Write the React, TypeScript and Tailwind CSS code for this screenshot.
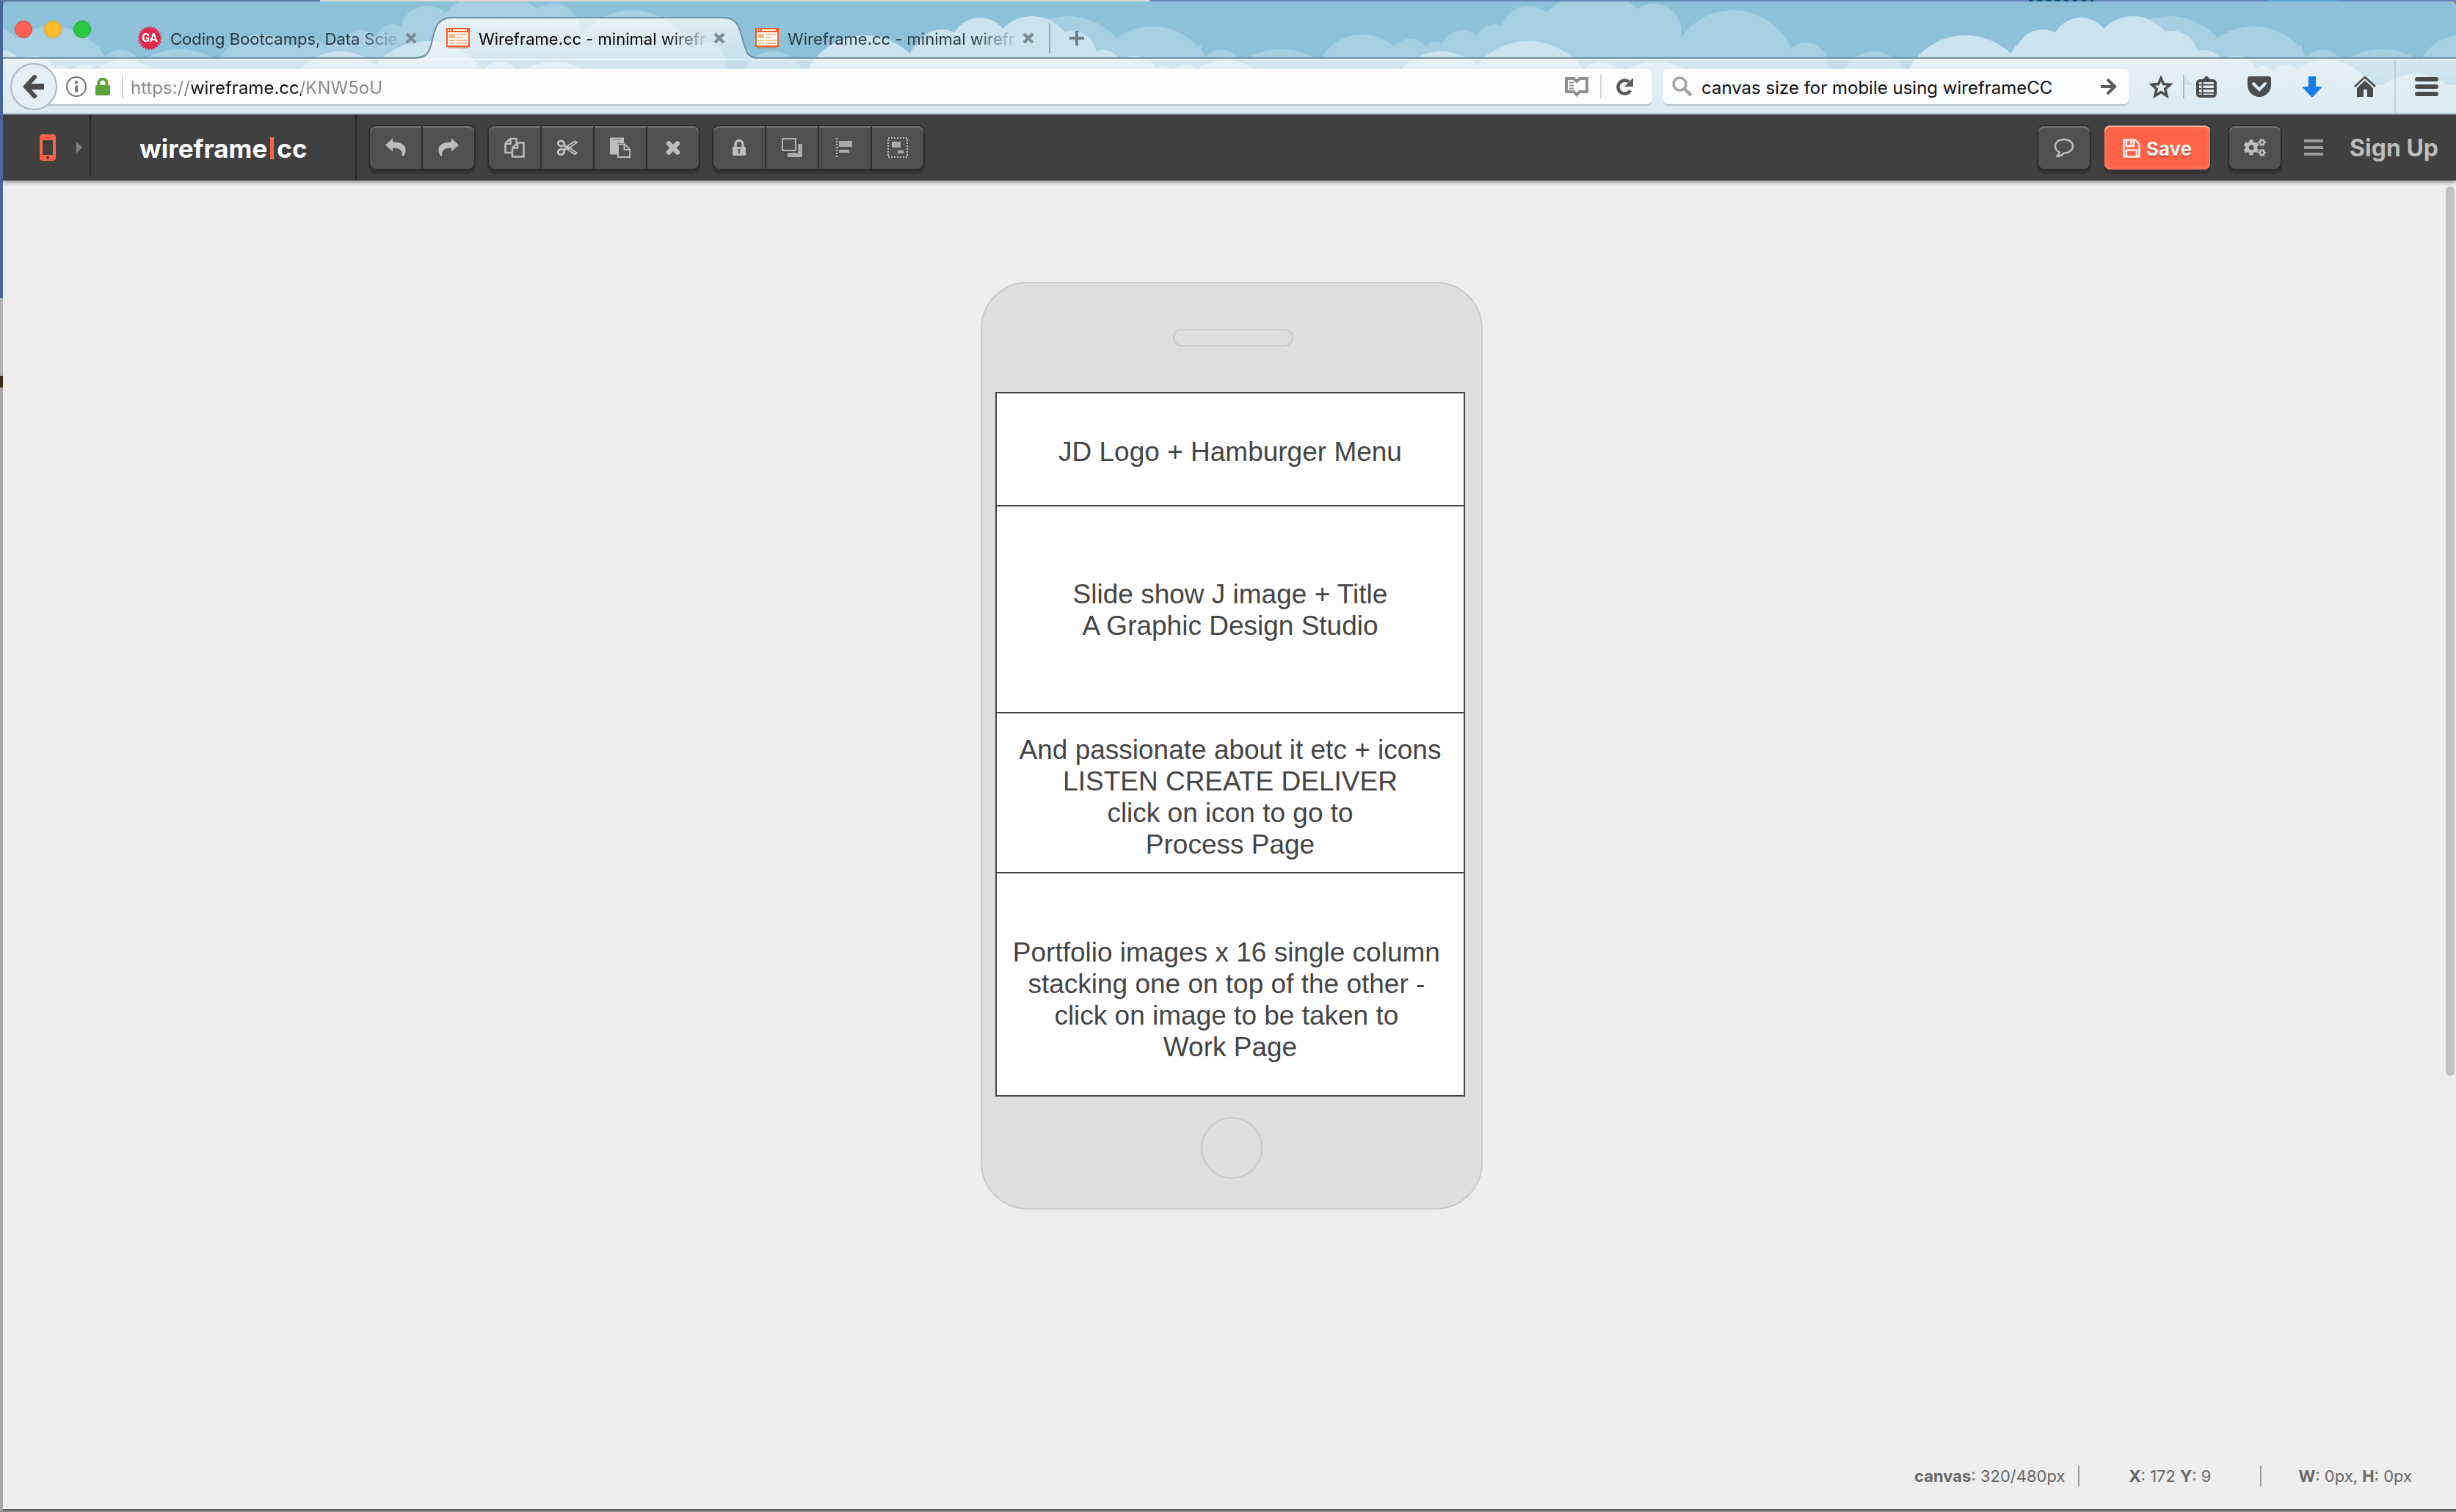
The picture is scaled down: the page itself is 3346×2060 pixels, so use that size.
import React from 'react';
import { FaCogs } from 'react-icons/fa';

type Cloud = [cx: number, top: number, r: number];

// Cloud tops of the browser theme; the artwork repeats every 1500px.
const FAR_CLOUDS: Cloud[] = [
  [10, 47, 65], [75, 53, 29], [109, 57, 15], [146, 41, 29], [190, 33, 26], [236, 8, 37],
  [326, -10, 92], [407, 5, 38], [515, 14, 86], [614, 58, 30], [707, 70, 45], [1109, 22, 88],
  [1224, 36, 84], [1318, 68, 30], [1399, 67, 92],
];
const NEAR_CLOUDS: Cloud[] = [
  [118, 70, 74], [236, 56, 92], [335, 84, 30], [410, 84, 80], [832, 48, 88], [937, 40, 38],
  [989, 24, 40], [1060, 22, 55], [1114, 42, 34], [1157, 68, 26], [1200, 76, 32], [1237, 90, 15],
  [1269, 88, 25], [1324, 82, 70], [1444, 101, 70],
];

function Clouds({ list, fill }: { list: Cloud[]; fill: string }) {
  return (
    <g fill={fill}>
      {[-1500, 0, 1500].map((shift) =>
        list.map(([cx, top, r]) => <circle key={`${shift}-${cx}`} cx={cx + shift} cy={top + r - 2} r={r} />),
      )}
    </g>
  );
}

function ThemeArt() {
  return (
    <svg aria-hidden="true" className="absolute inset-0 h-full w-full">
      <defs>
        <pattern id="sky" x="342" y="0" width="1500" height="160" patternUnits="userSpaceOnUse">
          <rect width="1500" height="160" fill="#8dc1da" />
          <Clouds list={FAR_CLOUDS} fill="#a7cfe2" />
          <path d="M-10 72H150V50H230L640 70V160H-10ZM1100 60H1290V160H1100ZM0 94H1500V160H0Z" fill="#a7cfe2" />
          <Clouds list={NEAR_CLOUDS} fill="#cbe3ef" />
          <path d="M900 60H1130V160H840ZM0 114H1500V160H0Z" fill="#cbe3ef" />
        </pattern>
      </defs>
      <rect width="100%" height="100%" fill="url(#sky)" />
    </svg>
  );
}

function WireframeFavicon() {
  return (
    <svg aria-hidden="true" viewBox="0 0 32 28" className="h-7 w-8 shrink-0">
      <rect width="32" height="26" fill="#ff5a1a" />
      <rect x="2" y="2" width="2" height="2" fill="#fff" />
      <rect x="5" y="2" width="2" height="2" fill="#fff" />
      <rect x="9" y="2" width="19" height="2" fill="#fff" />
      <rect x="2" y="6" width="28" height="18" fill="#fff" />
      <path d="M4 8h8v6H4zM14 8h14v2H14zM14 12h8v2h-8zM4 16h8v2H4zM14 16h14v2H14zM4 20h8v2H4zM14 20h14v2H14z" fill="#ffb690" />
      <rect x="2" y="26" width="28" height="2" fill="#c2683f" opacity=".5" />
    </svg>
  );
}

function GaFavicon() {
  return (
    <span className="relative flex h-8 w-8 shrink-0 items-center justify-center">
      <svg aria-hidden="true" viewBox="0 0 32 32" className="absolute inset-0">
        <circle cx="16" cy="16" r="14.500" fill="#e5294b" />
        <circle cx="16" cy="16" r="14.500" fill="none" stroke="#e5294b" strokeWidth="3" strokeDasharray="1.9 1.9" />
      </svg>
      <span className="relative font-[Roboto,sans-serif] text-base font-bold text-white">GA</span>
    </span>
  );
}

function Tab({ title, icon, active }: { title: string; icon: React.ReactNode; active?: boolean }) {
  return (
    <div className="relative flex items-center">
      {icon}
      <button
        type="button"
        className={
          'ml-3 w-[312px] whitespace-nowrap pt-0.5 text-left text-[22px] leading-7 [mask-image:linear-gradient(to_right,#000_255px,transparent_318px)] ' +
          (active ? 'text-black' : 'text-[#2b3a42]')
        }
      >
        {title}
      </button>
      <button type="button" aria-label="Close tab" className="ml-2">
        <svg viewBox="0 0 16 16" className="h-4 w-4" stroke="#7c8a92" strokeWidth="4">
          <path d="M2 2l12 12M14 2L2 14" />
        </svg>
      </button>
    </div>
  );
}

function TabStrip() {
  return (
    <div className="relative flex h-[78px]">
      <div className="flex w-[561px] border-b-2 border-[#6f8fa0] pl-4">
        <div className="flex gap-4 pt-[26px]">
          <button type="button" aria-label="Close window" className="h-6 w-6 rounded-full border border-[#e0443e] bg-[#ff5f57]" />
          <button type="button" aria-label="Minimize window" className="h-6 w-6 rounded-full border border-[#dea123] bg-[#ffbd2e]" />
          <button type="button" aria-label="Zoom window" className="h-6 w-6 rounded-full border border-[#1aab29] bg-[#28c940]" />
        </div>
        <div className="ml-16 mt-6 flex h-[52px] items-center">
          <Tab title="Coding Bootcamps, Data Scie" icon={<GaFavicon />} />
        </div>
      </div>
      <div className="relative w-[468px] pl-[43px] pt-6">
        <svg aria-hidden="true" viewBox="0 0 468 60" className="absolute left-0 top-5 h-[60px] w-[468px]">
          <defs>
            <linearGradient id="tabFill" x1="0" y1="0" x2="0" y2="1">
              <stop offset="0" stopColor="#fff" stopOpacity=".72" />
              <stop offset="1" stopColor="#fff" stopOpacity=".5" />
            </linearGradient>
          </defs>
          <path d="M0 57C14 57 19 51 22 40C28 18 28 2 52 2H420C441 2 443 18 448 36C452 50 455 57 468 57V58H0Z" fill="url(#tabFill)" />
          <path d="M0 57C14 57 19 51 22 40C28 18 28 2 52 2H420C441 2 443 18 448 36C452 50 455 57 468 57" fill="none" stroke="#6f8fa0" strokeWidth="2" />
        </svg>
        <div className="flex h-[52px] items-center">
          <Tab active title="Wireframe.cc - minimal wirefr" icon={<WireframeFavicon />} />
        </div>
      </div>
      <div className="flex flex-1 border-b-2 border-[#6f8fa0] pt-6">
        <div className="-ml-1 flex h-[52px] items-center">
          <Tab title="Wireframe.cc - minimal wirefr" icon={<WireframeFavicon />} />
          <span className="ml-5 h-10 w-0.5 bg-[#83a9bb]" />
          <button type="button" aria-label="New tab" className="ml-[26px]">
            <svg viewBox="0 0 20 20" className="h-5 w-5" stroke="#6f8189" strokeWidth="4">
              <path d="M10 0v20M0 10h20" />
            </svg>
          </button>
        </div>
      </div>
    </div>
  );
}

function NavBar() {
  return (
    <div className="relative flex h-[76px] items-center border-b-2 border-[#b3c5cf] bg-gradient-to-b from-white/50 to-white/30 pl-2.5 pr-6 pt-0.5 shadow-[inset_0_2px_0_rgba(255,255,255,0.5)]">
      <button
        type="button"
        aria-label="Back"
        className="relative z-10 flex h-16 w-16 shrink-0 items-center justify-center rounded-full border-2 border-[#a9b8c0] bg-[#e4eff6]"
      >
        <svg viewBox="0 0 30 32" className="h-8 w-[30px]" fill="none" stroke="#4a4a4a">
          <path d="M4 16h25" strokeWidth="8" />
          <path d="M16 3L4 16l12 13" strokeWidth="6" strokeLinecap="round" />
        </svg>
      </button>
      <div className="-ml-4 flex h-12 flex-1 items-center rounded-r-md bg-[#fbfdfe] pl-7 pr-3 shadow-[0_2px_0_#b5c5ce]">
        <svg viewBox="0 0 28 28" className="h-7 w-7 shrink-0" fill="none" stroke="#777">
          <circle cx="14" cy="14" r="13" strokeWidth="2" />
          <path d="M14 12.500v9" strokeWidth="4" />
          <circle cx="14" cy="8" r="2.200" fill="#777" stroke="none" />
        </svg>
        <svg viewBox="0 0 20 24" className="ml-3 h-6 w-5 shrink-0">
          <path d="M4.500 12V7a5.500 5.500 0 0 1 11 0v5" fill="none" stroke="#5aa137" strokeWidth="4" />
          <rect y="10" width="20" height="14" rx="2" fill="#5aa137" />
        </svg>
        <span className="ml-4 h-8 w-0.5 bg-[#d3d5d7]" />
        <input
          aria-label="Address"
          defaultValue="https://wireframe.cc/KNW5oU"
          className="ml-2.5 min-w-0 flex-1 bg-[linear-gradient(to_right,#8a8a8a_83px,#111_83px,#111_232px,#8a8a8a_232px)] bg-clip-text pt-1 text-2xl text-transparent outline-none"
        />
        <button type="button" aria-label="Reader view">
          <svg viewBox="0 0 32 28" className="h-7 w-8" fill="none" stroke="#909092">
            <path d="M2 3H12L16 7L20 3H30V21H20L16 25L12 21H2Z" strokeWidth="4" />
            <path d="M16 6v2" strokeWidth="4" />
            <path d="M6 8.500h6M6 12.500h6M6 16.500h6" strokeWidth="2" />
          </svg>
        </button>
        <span className="ml-4 h-8 w-0.5 bg-[#d3d5d7]" />
        <button type="button" aria-label="Reload" className="ml-5 mr-3">
          <svg viewBox="0 0 24 24" className="h-6 w-6">
            <path d="M19 17.500A9 9 0 1 1 17 5.500" fill="none" stroke="#58585a" strokeWidth="4.500" />
            <path d="M23 0V12H11Z" fill="#58585a" />
          </svg>
        </button>
      </div>
      <div className="ml-4 flex h-12 w-[634px] items-center rounded-md bg-[#fbfdfe] pl-3 pr-4 shadow-[0_2px_0_#b5c5ce]">
        <svg viewBox="0 0 28 28" className="h-7 w-7 shrink-0" fill="none" stroke="#a0a2a4">
          <circle cx="10.500" cy="10.500" r="8.500" strokeWidth="3.500" />
          <path d="M16.500 16.500L26 26" strokeWidth="4.500" />
        </svg>
        <input
          aria-label="Search"
          defaultValue="canvas size for mobile using wireframeCC"
          className="ml-3 min-w-0 flex-1 bg-transparent pt-1 text-2xl text-[#111] outline-none"
        />
        <button type="button" aria-label="Search now">
          <svg viewBox="0 0 22 22" className="h-[22px] w-[22px]" fill="none" stroke="#58585a" strokeWidth="4">
            <path d="M0 11h18M9 1l10 10L9 21" />
          </svg>
        </button>
      </div>
      <button type="button" aria-label="Bookmark this page" className="ml-7">
        <svg viewBox="0 0 32 32" className="h-8 w-8" fill="none" stroke="#4c4c4c" strokeWidth="3.500">
          <path d="M16 4.500L19.600 12.500L28.500 13.300L21.800 19.200L24 28.500L16 23.500L8 28.500L10.200 19.200L3.500 13.300L12.400 12.500Z" />
        </svg>
      </button>
      <span className="ml-3.5 h-8 w-0.5 bg-[#a9bac3]" />
      <button type="button" aria-label="Bookmarks menu" className="ml-4">
        <svg viewBox="0 0 28 30" className="h-[30px] w-7">
          <path d="M14 0L20 6H8Z" fill="#4c4c4c" />
          <rect x="2" y="7" width="24" height="21" rx="3" fill="none" stroke="#4c4c4c" strokeWidth="4" />
          <path d="M9 12.500h16M9 18h16M9 23.500h16" stroke="#4c4c4c" strokeWidth="2" />
          <path d="M8.500 8v20" stroke="#4c4c4c" strokeWidth="2" />
          <path d="M4 12.500h3M4 18h3M4 23.500h3" stroke="#4c4c4c" strokeWidth="2" />
        </svg>
      </button>
      <button type="button" aria-label="Save to Pocket" className="ml-[42px]">
        <svg viewBox="0 0 32 28" className="h-7 w-8">
          <path d="M3 0H29A3 3 0 0 1 32 3V12A16 16 0 0 1 0 12V3A3 3 0 0 1 3 0Z" fill="#4c4c4c" />
          <path d="M8 10l8 8 8-8" fill="none" stroke="#e0edf4" strokeWidth="4" strokeLinecap="round" />
        </svg>
      </button>
      <button type="button" aria-label="Downloads" className="ml-[42px]">
        <svg viewBox="0 0 28 28" className="h-7 w-7">
          <path d="M9 0H19V14H28L16 27Q14 29 12 27L0 14H9Z" fill="#177fe8" />
        </svg>
      </button>
      <button type="button" aria-label="Home" className="ml-[42px]">
        <svg viewBox="0 0 32 28" className="h-7 w-8">
          <path d="M2 14L16 1L30 14" fill="none" stroke="#4c4c4c" strokeWidth="2.500" />
          <path d="M5 16L16 5.500L27 16V28H19V18H14V28H5Z" fill="#4c4c4c" />
        </svg>
      </button>
      <span className="ml-6 h-[72px] w-0.5 bg-[#bccfd9]" />
      <button type="button" aria-label="Open menu" className="ml-[26px]">
        <svg viewBox="0 0 32 26" className="h-[26px] w-8" stroke="#4a4a4a" strokeWidth="6" strokeLinecap="round">
          <path d="M3 3h26M3 13h26M3 23h26" />
        </svg>
      </button>
    </div>
  );
}

const SURFACE = 'bg-[#505050] shadow-[inset_0_2px_0_#767676,0_0_0_2px_#2c2c2c,0_5px_0_2px_#333333] ';

function ToolGroup({ tools }: { tools: { label: string; icon: React.ReactNode }[] }) {
  return (
    <div className={SURFACE + 'flex h-[58px] rounded-lg'}>
      {tools.map((tool, i) => (
        <button
          key={tool.label}
          type="button"
          aria-label={tool.label}
          className={'flex items-center justify-center ' + (i ? 'w-[72px] border-l-2 border-[#303030]' : 'w-[70px]')}
        >
          <svg viewBox="0 0 28 28" className="h-7 w-7" fill="none" stroke="#bdbdbd">
            {tool.icon}
          </svg>
        </button>
      ))}
    </div>
  );
}

const ARROW = 'M0 10.500L10 1.500V6.500C22 6.500 28 11 27.500 18C27.500 21 26 24 25 25.500H22.500C24 18 20 14.500 10 14.500V19.500Z';

const HISTORY = [
  { label: 'Undo', icon: <path d={ARROW} fill="#bdbdbd" stroke="none" /> },
  { label: 'Redo', icon: <path d={ARROW} fill="#bdbdbd" stroke="none" transform="matrix(-1 0 0 1 28 0)" /> },
];
const EDIT = [
  {
    label: 'Copy',
    icon: (
      <g strokeWidth="2.500">
        <path d="M10 21H1.500V8.500L8 2H16.500V7M8.500 2V9H1.500" />
        <path d="M18 7.500H26.500V26.500H11V14.500ZM18 7.500V14.500H11" />
      </g>
    ),
  },
  {
    label: 'Cut',
    icon: (
      <g>
        <ellipse cx="5.500" cy="8.500" rx="4.200" ry="3.500" strokeWidth="3" transform="rotate(20 5.500 8.500)" />
        <ellipse cx="5.500" cy="20" rx="4.200" ry="3.500" strokeWidth="3" transform="rotate(-20 5.500 20)" />
        <path d="M9 10.500L13.500 14L9 18" strokeWidth="3" />
        <path d="M12 13.500L24 5.500L27 7L15.500 15.500ZM12 15L24 23L27 21.500L15.500 13.500Z" strokeWidth="2" />
      </g>
    ),
  },
  {
    label: 'Paste',
    icon: (
      <g>
        <path d="M1 0.500H19V8H10V23.500H1Q0 23.500 0 22.500V1.500Q0 .5 1 .5Z" fill="#bdbdbd" stroke="none" />
        <path d="M5 3.500H15" stroke="#6a6a6a" />
        <path d="M11 9.500H20L27 16.500V27H11ZM19.500 9.500V17H27" strokeWidth="2" />
      </g>
    ),
  },
  { label: 'Delete', icon: <path d="M8 8.500L20 20.500M20 8.500L8 20.500" strokeWidth="6.500" strokeLinecap="round" /> },
];
const ARRANGE = [
  {
    label: 'Lock',
    icon: (
      <g>
        <path d="M9 14V9.500a5 5 0 0 1 10 0V14" strokeWidth="3.500" />
        <rect x="5" y="13" width="18" height="12" rx="1.500" fill="#bdbdbd" stroke="none" />
        <path d="M14 16v6" stroke="#555" strokeWidth="2" />
        <path d="M12.500 17h3" stroke="#555" strokeWidth="2" />
      </g>
    ),
  },
  {
    label: 'Order',
    icon: (
      <g>
        <path d="M22 9H28V27H8V21H22Z" fill="#ababab" stroke="none" />
        <path d="M21 4H22V21H4V20H21Z" fill="#383838" stroke="none" />
        <rect x="1" y="2" width="18" height="16" stroke="#b5b5b5" strokeWidth="2" />
      </g>
    ),
  },
  {
    label: 'Align',
    icon: (
      <g>
        <path d="M3 1V27" stroke="#bdbdbd" strokeWidth="2" strokeDasharray="2 2" />
        <path d="M6 5H24V13H6ZM6 17H20V21H6Z" fill="#ababab" stroke="none" />
      </g>
    ),
  },
  {
    label: 'Group',
    icon: (
      <g>
        <rect x="1" y="1" width="26" height="26" strokeWidth="2" strokeDasharray="2 2" />
        <path d="M6 6H18V14H6ZM14 18H22V22H14Z" fill="#ababab" stroke="none" />
      </g>
    ),
  },
];

function Toolbar() {
  return (
    <div className="relative z-10 flex h-[90px] bg-[#404040] pr-6 shadow-[0_3px_5px_rgba(0,0,0,0.35)]">
      <button type="button" aria-label="Choose device" className="mb-1.5 flex w-[120px] items-center border-r-2 border-[#262626] pl-[50px] pt-1.5">
        <svg viewBox="0 0 22 36" className="h-9 w-[22px]">
          <rect width="22" height="36" rx="4" fill="#ff6347" />
          <rect x="4" y="8" width="14" height="20" fill="#404040" />
          <rect x="9" y="4" width="4" height="1" fill="#a04535" />
          <circle cx="11" cy="32" r="2" fill="#404040" />
        </svg>
        <svg viewBox="0 0 8 16" className="ml-7 h-4 w-2">
          <path d="M0 0L8 8L0 16Z" fill="#808080" />
        </svg>
      </button>
      <a href="#home" className="flex w-[362px] items-center border-r-2 border-[#262626] pl-[66px] pt-0.5 text-[35px] font-bold leading-none text-white">
        wireframe
        <span className="mx-1 h-[30px] w-[5px] bg-[#ff6347]" />
        cc
      </a>
      <div className="flex flex-1 items-center gap-5 pl-[18px]">
        <ToolGroup tools={HISTORY} />
        <ToolGroup tools={EDIT} />
        <ToolGroup tools={ARRANGE} />
      </div>
      <div className="flex items-center">
        <button type="button" aria-label="Comments" className={SURFACE + 'flex h-[58px] w-[70px] items-center justify-center rounded-lg'}>
          <svg viewBox="0 0 28 28" className="h-7 w-7" fill="none" stroke="#bdbdbd" strokeWidth="2.500">
            <path d="M8 20.500C-2 16 .5 3 14 3C30 3 30 21 14 21.500C11.500 24.500 8 26 4 26C6.500 24 8 22.500 8 20.500Z" strokeLinejoin="round" />
          </svg>
        </button>
        <button
          type="button"
          className="ml-5 flex h-[60px] w-36 items-center justify-center gap-2 rounded-lg bg-[#ff6347] pt-0.5 text-[26px] font-bold text-[#f3efee] shadow-[inset_0_2px_0_#ffb5a6,inset_0_0_6px_#ff8f7a,0_-2px_0_#333333,0_5px_0_1px_#333333] [text-shadow:0_2px_0_#c2492f]"
        >
          <svg viewBox="0 0 24 26" className="h-[26px] w-6" fill="none" stroke="#f3efee" strokeWidth="2.500">
            <path d="M1.500 1.500H17L22.500 7.500V24.500H1.500Z" />
            <path d="M5 1.500V10H15V1.500" />
            <path d="M9.500 3h3.500v5H9.500z" fill="#f3efee" stroke="none" />
            <path d="M5 24.500V15.500H19V24.500" />
          </svg>
          Save
        </button>
        <button type="button" aria-label="Settings" className={SURFACE + 'ml-[26px] flex h-[58px] w-[70px] items-center justify-center rounded-lg'}>
          <FaCogs className="h-8 w-[30px] text-[#bdbdbd]" />
        </button>
        <button type="button" aria-label="Menu" className="ml-8">
          <svg viewBox="0 0 26 24" className="h-6 w-[26px]" fill="#9c9c9c">
            <path d="M0 1h26v4H0zM0 10h26v4H0zM0 19h26v4H0z" />
          </svg>
        </button>
        <a href="#signup" className="ml-9 pt-0.5 text-[32px] font-bold leading-none text-[#bdbdbd]">
          Sign Up
        </a>
      </div>
    </div>
  );
}

const BLOCKS = [
  { box: 'h-[154px] pt-[58px]', lines: ['JD Logo + Hamburger Menu'] },
  { box: 'h-[282px] pt-[98px]', lines: ['Slide show J image + Title', 'A Graphic Design Studio'] },
  {
    box: 'h-[218px] pt-7',
    lines: ['And passionate about it etc + icons', 'LISTEN CREATE DELIVER', 'click on icon to go to', 'Process Page'],
  },
  {
    box: 'h-[304px] pt-[86px]',
    lines: [
      'Portfolio images x 16 single column ',
      'stacking one on top of the other - ',
      'click on image to be taken to ',
      'Work Page',
    ],
  },
];

function Phone() {
  return (
    <div className="flex w-[684px] flex-col items-center rounded-[64px] border-2 border-[#cbcbcb] bg-[#dedede] pb-10 pt-[62px]">
      <div className="ml-1 h-6 w-[164px] rounded-xl border-2 border-[#cbcbcb]" />
      <div className="-ml-1 mt-[62px] w-[640px] border-2 border-b-0 border-[#444] bg-white">
        {BLOCKS.map(({ box, lines }) => (
          <div
            key={lines[0]}
            className={
              'whitespace-pre border-b-2 border-[#444] text-center font-["Liberation_Sans",sans-serif] text-[37px] leading-[43px] text-[#444] ' + box
            }
          >
            {lines.map((line) => (
              <p key={line}>{line}</p>
            ))}
          </div>
        ))}
      </div>
      <div className="mt-7 h-[84px] w-[84px] rounded-full border-2 border-[#cbcbcb]" />
    </div>
  );
}

function StatusBar() {
  return (
    <div className="mb-[31px] flex items-center justify-end pr-[60px] text-[22px] leading-7 text-[#666]">
      <span className="border-r-2 border-[#999] pr-[18px]"><b>canvas</b>: 320/480px</span>
      <span className="w-[248px] border-r-2 border-[#999] text-center"><b>X</b>: 172 <b>Y</b>: 9</span>
      <span className="pl-[50px]"><b>W</b>: 0px, <b>H</b>: 0px</span>
    </div>
  );
}

export default function App() {
  return (
    <div className="flex min-h-screen flex-col bg-[#8a8a8a] font-[Inter,sans-serif]">
      <div className="flex h-0.5">
        <span className="w-[436px] bg-[#5478a4]" />
        <span className="w-[1130px] bg-[#dcdad6]" />
        <span className="flex-1 bg-[#6488b4]" />
        <span className="w-[88px] bg-[repeating-linear-gradient(to_right,#23407f_0px,#23407f_6px,#3b9a9f_6px,#3b9a9f_12px)]" />
        <span className="w-[238px] bg-[#6488b4]" />
        <span className="w-[94px] bg-[#58a6d8]" />
        <span className="w-[162px] bg-[#6488b4]" />
      </div>
      <div className="flex flex-1">
        <div className="flex w-1 flex-col">
          <span className="h-[404px] bg-[#48669a]" />
          <span className="h-[106px] bg-[#b3b2b1]" />
          <span className="h-4 bg-[#3a2a18]" />
          <span className="flex-1 bg-[#a9a8a7]" />
        </div>
        <div className="flex flex-1 flex-col overflow-hidden rounded-t-lg border-b-2 border-[#5c5c5c] bg-[#eeeeee]">
          <header className="relative">
            <ThemeArt />
            <TabStrip />
            <NavBar />
          </header>
          <Toolbar />
          <main className="relative flex flex-1 flex-col">
            <div className="flex flex-1 justify-center pl-1.5 pt-[138px]">
              <div>
                <Phone />
              </div>
            </div>
            <StatusBar />
            <span className="absolute right-0.5 top-2 h-[1212px] w-3 rounded-full bg-[#c1c1c1]" />
          </main>
        </div>
      </div>
      <div className="h-0.5 bg-[#8a8a8a]" />
    </div>
  );
}
